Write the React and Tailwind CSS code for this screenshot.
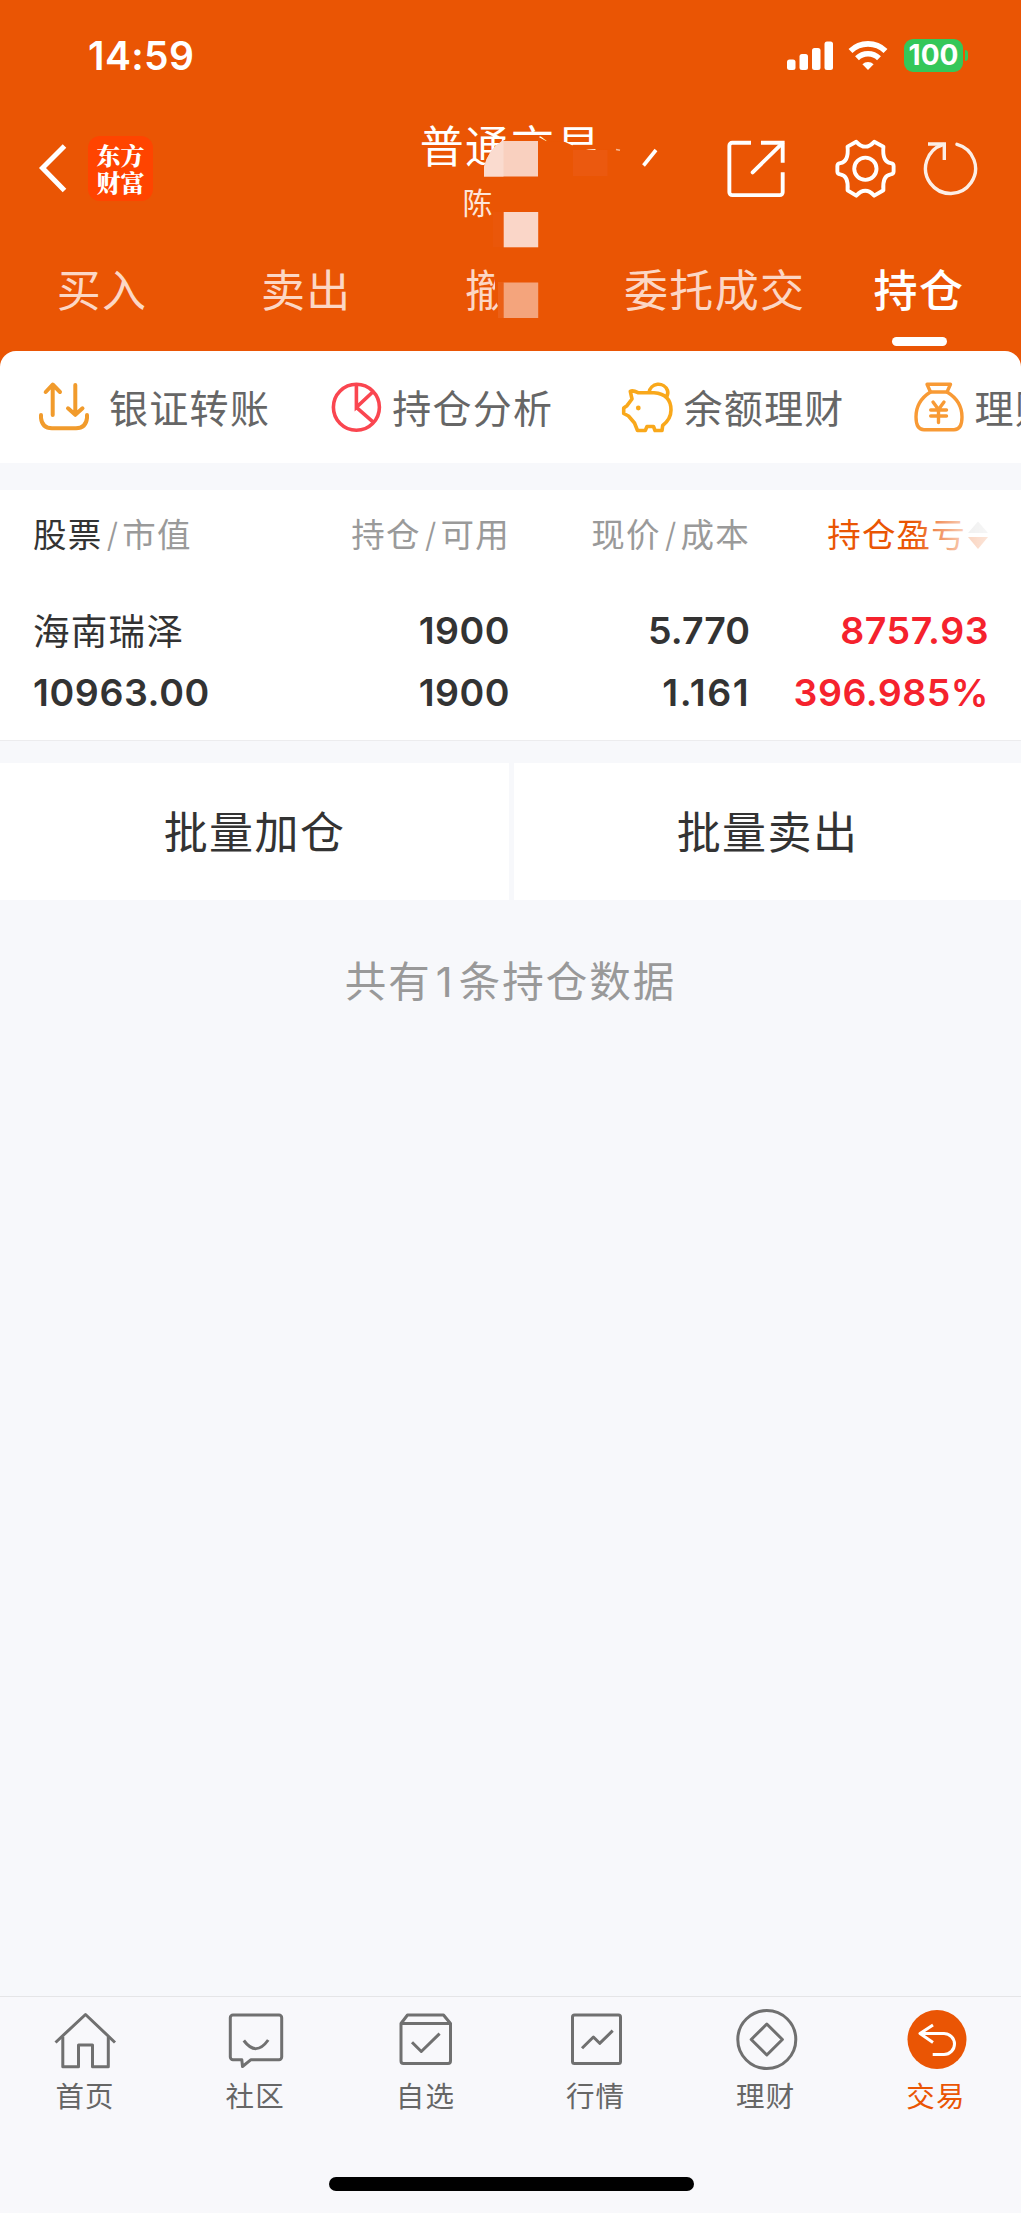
import clsx from 'clsx';

const TABS = ['买入', '卖出', '撤单', '委托成交', '持仓'];

const HEADERS = ['持仓/可用', '现价/成本'];

/* ── Status bar ──────────────────────────────────────────────── */
const SignalIcon = () => (
  <svg width="48" height="32" viewBox="0 0 48 32" fill="#fff">
    <rect x="1" y="20.500" width="8.500" height="10.500" rx="2.500" />
    <rect x="13.500" y="15" width="8.500" height="16" rx="2.500" />
    <rect x="26" y="9" width="8.500" height="22" rx="2.500" />
    <rect x="38.500" y="2.500" width="8.500" height="28.500" rx="2.500" />
  </svg>
);

const WifiIcon = () => (
  <svg width="40" height="32" viewBox="0 0 40 32" fill="none" stroke="#fff" strokeWidth="5.600">
    <path d="M2.500 12a25 25 0 0 1 35 0" />
    <path d="M9 19.200a16 16 0 0 1 22 0" />
    <path d="M20 31l-5.600-5.800a8 8 0 0 1 11.200 0z" fill="#fff" stroke="none" />
  </svg>
);

const StatusBar = () => (
  <div className="flex h-[110px] items-center justify-between pr-[53px] pl-[88px]">
    <span className="text-[39px] leading-none font-semibold tracking-[0.4px]">14:59</span>
    <div className="flex items-center">
      <SignalIcon />
      <div className="ml-[14px]">
        <WifiIcon />
      </div>
      <div className="ml-4 flex h-[33px] w-[59px] items-center justify-center rounded-[9px] bg-[#34c759] text-[28px] leading-none font-bold">
        100
      </div>
      <div className="ml-[2px] h-[11px] w-[3px] rounded-r-full bg-[#34c759]" />
    </div>
  </div>
);

/* ── Header ──────────────────────────────────────────────────── */
const ShareIcon = () => (
  <svg width="64" height="64" viewBox="-0.500 -1.500 66 66" fill="none" stroke="#fff" strokeWidth="4">
    <path d="M26.300 5.500H7a3 3 0 0 0-3 3V56.500a3 3 0 0 0 3 3h49a3 3 0 0 0 3-3V36" />
    <path d="M36.600 5.500H59V26" />
    <path d="M58.500 6L28 36" strokeLinecap="round" />
  </svg>
);

const GearIcon = () => (
  <svg width="64" height="64" viewBox="-1 -1.500 66 66" fill="none" stroke="#fff" strokeWidth="4" strokeLinejoin="round">
    <path d="M14 9.500L23 4.500Q32.300 14.500 41.500 4.500L51 9.500Q49.500 25 58.500 26.500Q61.500 27 61.500 29.500V35Q61.500 37.500 58.500 38Q49.500 39.500 51 54.500L41.500 60Q32.300 50 23 60L14 54.500Q15.500 39.500 6.500 38Q3.500 37.500 3.500 35V29.500Q3.500 27 6.500 26.500Q15.500 25 14 9.500Z" />
    <circle cx="32.400" cy="32.300" r="11.500" />
  </svg>
);

const RefreshIcon = () => (
  <svg width="58" height="60" viewBox="0 0 58 60" fill="none" stroke="#fff" strokeWidth="3.400" className="opacity-90">
    <path d="M35 6.300A25 25 0 1 1 21 6.600" strokeLinecap="round" />
    <path d="M6 6H22.300V22" />
  </svg>
);

// blocks that hide the account name
const PrivacyMask = () => (
  <svg className="absolute top-[100px] left-[400px]" width="280" height="240" viewBox="0 0 280 240">
    <path
      d="M84 77V66Q90 50 101 42Q112 35 126 35.600L137 36L146 41L165 42Q180 50 197 50L216 49L222 52H262V80H84Z"
      fill="#ea5504"
    />
    <path d="M84 76.500V67Q88 50 102 41H138V76.500Z" fill="#f9d0bf" />
    <path d="M84 76.500V67Q88 50 102 41H103.500V76.500Z" fill="#fadbcf" />
    <rect x="173" y="50" width="34.500" height="26" fill="#eb590f" />
    <path d="M216 49.500l4 .8" stroke="#f7b793" strokeWidth="1.600" />
    <path d="M243.500 65.500L256 50" stroke="#fff" strokeWidth="3.600" />
    <rect x="93" y="112" width="11" height="35" fill="#ea570a" />
    <rect x="103.700" y="112" width="34.500" height="35.300" fill="#fad6c8" />
    <path d="M95 166H160V219H99V208L95 200Z" fill="#ea5504" />
    <rect x="98" y="182" width="6" height="36" fill="#eb6017" />
    <rect x="103.700" y="182.500" width="34.500" height="35.500" fill="#f4a47c" />
  </svg>
);

const Header = () => (
  <header className="relative h-[351px] bg-[#ea5504] text-white">
    <StatusBar />
    <div className="grid h-[120px] grid-cols-3 pt-[10px]">
      <div className="flex h-24 items-center pl-[38px]">
        <svg width="30" height="52" viewBox="0 0 30 52" fill="none" stroke="#fff" strokeWidth="5">
          <path d="M26.500 4L4.500 26L26.500 48.500" />
        </svg>
        <div className="ml-5 flex size-[65px] flex-col items-center justify-center rounded-xl bg-[#ff4400] font-['Noto_Serif_CJK_SC','Noto_Sans_CJK_SC',serif] text-[24px] leading-[27px] font-black">
          <span>东方</span>
          <span>财富</span>
        </div>
      </div>
      <div className="flex flex-col items-center">
        <h1 className="mt-px text-[44px] leading-[52px] tracking-[1.400px]">普通交易</h1>
        <span className="mt-3 mr-[66px] text-[30px] leading-9 text-[#fde5da]">陈</span>
      </div>
      <div className="flex h-24 items-center pl-[44px]">
        <ShareIcon />
        <div className="ml-[44px]">
          <GearIcon />
        </div>
        <div className="ml-[25px]">
          <RefreshIcon />
        </div>
      </div>
    </div>
    <nav className="grid grid-cols-5 pt-[35px]">
      {TABS.map((tab) => {
        const active = tab === '持仓';
        return (
          <div key={tab} className="flex flex-col items-center">
            <span
              className={clsx(
                'text-[44px] leading-[52px] tracking-[1.400px] whitespace-nowrap',
                active ? 'font-medium text-white' : 'text-[#fcd7c5]'
              )}
            >
              {tab}
            </span>
            {active && <span className="mt-5 ml-0.5 h-[9px] w-[55px] rounded-full bg-white" />}
          </div>
        );
      })}
    </nav>
    <PrivacyMask />
  </header>
);

/* ── Quick links ─────────────────────────────────────────────── */
const TransferIcon = () => (
  <svg width="56" height="56" viewBox="0 0 56 56" fill="none" stroke="#f19b2c" strokeWidth="4" strokeLinecap="round" strokeLinejoin="round">
    <path d="M5 36v3q1 10 11 10.300h24q10-.3 11-10.300v-3" />
    <path d="M16.700 36V6M9.700 13l7-7.500 7.300 7.500" />
    <path d="M39.300 6v29.500M32 29.300l7.300 6.500 7.200-6.500" />
  </svg>
);

const PieIcon = () => (
  <svg width="56" height="56" viewBox="0 0 56 56" fill="none" stroke="#fa4650" strokeWidth="3.600">
    <circle cx="27.400" cy="28.300" r="23" />
    <path d="M27.400 5.300V28.300L44 12.700M27.400 28.300L44.500 43.300" />
  </svg>
);

const PigIcon = () => (
  <svg width="56" height="56" viewBox="0 0 56 56" fill="none" stroke="#f9a81b" strokeWidth="3.600" strokeLinejoin="round">
    <path d="M10.300 12.300Q13 11 18 13.700H34Q51 15 51 31Q51 40 42.700 46.500L42 51.500H35L33.500 47.500H27L25.300 51.500H17.500L14.500 44L8.500 37L3.700 34.500V29L7 26.700L12 20Z" />
    <path d="M29 13.500A9.600 9.600 0 0 1 47.500 11.500Q48.500 14.500 46.500 18" />
    <circle cx="18.300" cy="29" r="2.400" fill="#f9a81b" stroke="none" />
  </svg>
);

const MoneyBagIcon = () => (
  <svg width="56" height="56" viewBox="0 0 56 56" fill="none" stroke="#f89a35" strokeWidth="3.400" strokeLinejoin="round" strokeLinecap="round">
    <path d="M16 5.300H39.500L36 13H19.500Z" />
    <path d="M19.500 13Q5 22 5 38Q5 50.700 13 50.700H43Q51 50.700 51 38Q51 22 36 13" />
    <path d="M22 23l5.500 7.500L33 23M27.500 30.500V43.500M19.700 31H35.500M19.700 37H35.500" />
  </svg>
);

const QUICK_LINKS = [
  { label: '银证转账', icon: TransferIcon, spacing: 'gap-[17px] mr-[59px]' },
  { label: '持仓分析', icon: PieIcon, spacing: 'gap-[7px] mr-[67px]' },
  { label: '余额理财', icon: PigIcon, spacing: 'gap-[7px] mr-[66px]' },
  { label: '理财', icon: MoneyBagIcon, spacing: 'gap-2' },
];

const QuickLinks = () => (
  <div className="bg-[#ea5504]">
    <div className="flex h-[112px] items-center overflow-hidden rounded-t-2xl bg-white pl-9">
      {QUICK_LINKS.map(({ label, icon: Icon, spacing }) => (
        <div key={label} className={clsx('flex shrink-0 items-center', spacing)}>
          <Icon />
          <span className="mt-[3px] text-[39px] leading-[48px] tracking-[1.300px] whitespace-nowrap text-[#666]">{label}</span>
        </div>
      ))}
    </div>
  </div>
);

/* ── Positions ───────────────────────────────────────────────── */
const Slash = () => <span className="pr-[3px] pl-1 font-light">/</span>;

const Positions = () => (
  <section className="mt-[27px] h-[251px] border-b border-[#ececee] bg-white pt-[21px] pl-[33px] text-[#333]">
    <div className="grid grid-cols-[237px_240px_240px_239px] text-right text-[33.500px] leading-[48px] tracking-[1.200px] text-[#9a9a9a]">
      <div className="text-left whitespace-nowrap">
        <span className="text-[#333]">股票</span>
        <Slash />
        市值
      </div>
      {HEADERS.map((h) => {
        const [a, b] = h.split('/');
        return (
          <div key={h}>
            {a}
            <Slash />
            {b}
          </div>
        );
      })}
      <div className="relative flex items-center justify-end text-[#ea5504]">
        持仓盈亏
        <svg width="23" height="32" viewBox="0 0 23 32">
          <path d="M2 14L12 2.500L22 14Z" fill="#c4c4c4" />
          <path d="M2 18H22L12 30Z" fill="#ea5504" />
        </svg>
        <div className="absolute inset-y-0 right-0 w-[76px] bg-linear-to-r from-white/0 via-white/75 via-70% to-white/85" />
      </div>
    </div>
    <div className="mt-[50px] grid grid-cols-[237px_240px_240px_239px] gap-y-[17px] text-right text-[37.500px] leading-[44px] font-semibold tracking-[0.500px]">
      <span className="pt-px text-left text-[36.500px] font-normal tracking-[1.300px]">海南瑞泽</span>
      <span>1900</span>
      <span className="tracking-[0px]">5.770</span>
      <span className="text-[#f5222d]">8757.93</span>
      <span className="text-left tracking-[0.600px]">10963.00</span>
      <span>1900</span>
      <span className="tracking-[1.500px]">1.161</span>
      <span className="text-[#f5222d]">396.985%</span>
    </div>
  </section>
);

/* ── Bottom nav ──────────────────────────────────────────────── */
const NAV_ITEMS = [
  {
    label: '首页',
    icon: (
      <>
        <path d="M2.500 34.500L32.500 6.500L62 34.500" />
        <path d="M9.800 28.700V58.700H25.500V37H39.500V58.700H55.300V28.700" />
      </>
    ),
  },
  {
    label: '社区',
    icon: (
      <>
        <path d="M10 7H56a2.700 2.700 0 0 1 2.700 2.700V49a2.700 2.700 0 0 1-2.700 2.700H28L19.500 58.500L18.800 51.700H10a2.700 2.700 0 0 1-2.700-2.700V9.700a2.700 2.700 0 0 1 2.700-2.700Z" />
        <path d="M20.800 32.500Q33 49 45.200 32" />
      </>
    ),
  },
  {
    label: '自选',
    icon: (
      <>
        <path d="M8 15.500L14.500 7H50.500L57.500 15.500V53a2.500 2.500 0 0 1-2.500 2.500H10.500a2.500 2.500 0 0 1-2.500-2.500ZM8 15.500H57.500" />
        <path d="M19 34.300L28.300 43.500L46.600 25.700" />
      </>
    ),
  },
  {
    label: '行情',
    icon: (
      <>
        <rect x="8.500" y="7" width="48" height="48.500" rx="2" />
        <path d="M18 40.300L29.400 29L35.700 35.300L48.700 22.700" />
      </>
    ),
  },
  {
    label: '理财',
    icon: (
      <>
        <circle cx="32.800" cy="31.500" r="29" />
        <path d="M32.800 16L48.400 31.500L32.800 47L17.200 31.500Z" />
      </>
    ),
  },
  {
    label: '交易',
    active: true,
    icon: (
      <>
        <circle cx="33" cy="31.500" r="29.500" fill="#ea5504" stroke="none" />
        <path d="M29 17L16 25.500L29 34.500M16 25.500H40a10.500 10.500 0 0 1 0 21H28.700" stroke="#fff" />
      </>
    ),
  },
];

const BottomNav = () => (
  <footer className="mt-auto h-[217px] border-t border-[#e5e5e7] bg-[#f8f8fb]">
    <div className="grid grid-cols-6 pt-[11px]">
      {NAV_ITEMS.map(({ label, icon, active }) => (
        <div key={label} className="flex flex-col items-center">
          <svg width="64" height="64" viewBox="0 0 64 64" fill="none" stroke="#707070" strokeWidth="3" strokeLinejoin="round">
            {icon}
          </svg>
          <span className={clsx('mt-[7px] text-[28.500px] leading-9 tracking-[1.200px]', active ? 'text-[#ea5504]' : 'text-[#666]')}>
            {label}
          </span>
        </div>
      ))}
    </div>
    <div className="mx-auto mt-[62px] h-[14px] w-[365px] translate-x-px rounded-full bg-black" />
  </footer>
);

const App = () => (
  <div className="flex h-[2213px] w-[1021px] flex-col overflow-hidden bg-[#f7f8fb] font-[Inter,'Noto_Sans_CJK_SC',sans-serif]">
    <Header />
    <QuickLinks />
    <Positions />
    <div className="mt-[22px] grid h-[137px] grid-cols-[509px_507px] gap-[5px] text-[44px] tracking-[1.400px] text-[#333]">
      <button className="bg-white pt-[3px]">批量加仓</button>
      <button className="bg-white pt-[3px]">批量卖出</button>
    </div>
    <p className="mt-[56px] text-center text-[41.500px] leading-[52px] tracking-[2px] text-[#999]">
      共有<span className="px-[4px]">1</span>条持仓数据
    </p>
    <BottomNav />
  </div>
);

export default App;
